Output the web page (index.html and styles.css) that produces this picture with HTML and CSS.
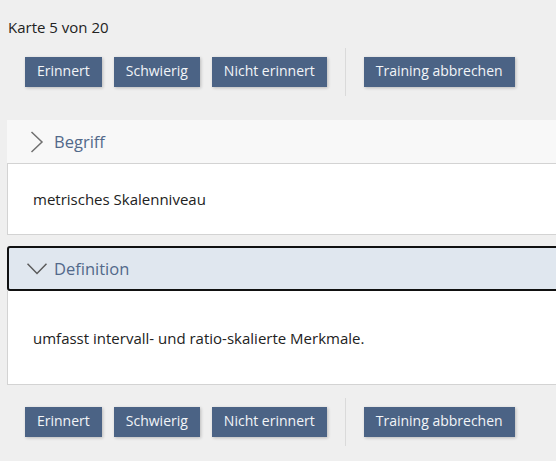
FILE: index.html
```html
<!DOCTYPE html>
<html lang="de">
<head>
<meta charset="utf-8">
<title>Karteikarten Training</title>
<link rel="stylesheet" href="styles.css">
</head>
<body>
<p class="count">Karte 5 von 20</p>
<div class="toolbar">
  <button class="btn">Erinnert</button>
  <button class="btn">Schwierig</button>
  <button class="btn">Nicht erinnert</button>
  <span class="sep"></span>
  <button class="btn">Training abbrechen</button>
</div>
<div class="cards">
  <section class="card">
    <div class="card-head">
      <svg class="chev" width="20" height="22" viewBox="0 0 20 22"><path d="M4.5 1 L15 11 L4.5 21" fill="none" stroke="#707070" stroke-width="1.5"/></svg>
      <span class="card-title">Begriff</span>
    </div>
    <div class="card-body short">metrisches Skalenniveau</div>
  </section>
  <section class="card open">
    <div class="card-head">
      <svg class="chev" width="20" height="12" viewBox="0 0 20 12"><path d="M0.5 0.8 L10 10.5 L19.5 0.8" fill="none" stroke="#5a5a5a" stroke-width="1.5"/></svg>
      <span class="card-title">Definition</span>
    </div>
    <div class="card-body tall">umfasst intervall- und ratio-skalierte Merkmale.</div>
  </section>
</div>
<div class="toolbar">
  <button class="btn">Erinnert</button>
  <button class="btn">Schwierig</button>
  <button class="btn">Nicht erinnert</button>
  <span class="sep"></span>
  <button class="btn">Training abbrechen</button>
</div>
</body>
</html>
```
FILE: styles.css
```css
html, body {
  overflow: hidden;
}
body {
  margin: 0;
  background: #efefef;
  font-family: "Open Sans", "Liberation Sans", sans-serif;
  color: #222;
  font-size: 15px;
}
.count {
  margin: 0;
  padding: 17px 8px 0;
  line-height: 20px;
}
.toolbar {
  display: flex;
  align-items: center;
  height: 48px;
  margin-top: 11px;
  padding-left: 25px;
}
.btn {
  display: flex;
  align-items: center;
  box-sizing: border-box;
  height: 30px;
  padding: 0 12px 3px;
  margin-right: 12px;
  border: none;
  border-radius: 0;
  background: #4b6385;
  color: #f2f5f8;
  font-family: inherit;
  font-size: 14px;
  box-shadow: 1px 1px 3px rgba(0, 0, 0, 0.22);
}
.sep {
  width: 1px;
  height: 48px;
  background: #dadada;
  margin: 0 18px 0 6px;
}
.cards {
  margin: 24px -30px 13px 7px;
}
.card-head {
  display: flex;
  align-items: center;
  box-sizing: border-box;
  height: 43px;
  padding-left: 20px;
  background: #f8f8f8;
}
.chev {
  display: block;
  margin-right: 7px;
}
.card-title {
  font-size: 16.5px;
  color: #52698a;
}
.card-body {
  background: #fff;
  border: 1px solid #d3d3d3;
  padding: 0 25px;
  display: flex;
  align-items: center;
  line-height: 20px;
}
.card-body.short {
  height: 70px;
}
.card.open {
  margin-top: 11px;
}
.card.open .card-head {
  height: 45px;
  border: 2px solid #111;
  border-radius: 3px;
  padding-left: 18px;
  background: #e0e7ef;
}
.card-body.tall {
  border-top: none;
  height: 93px;
}
```
